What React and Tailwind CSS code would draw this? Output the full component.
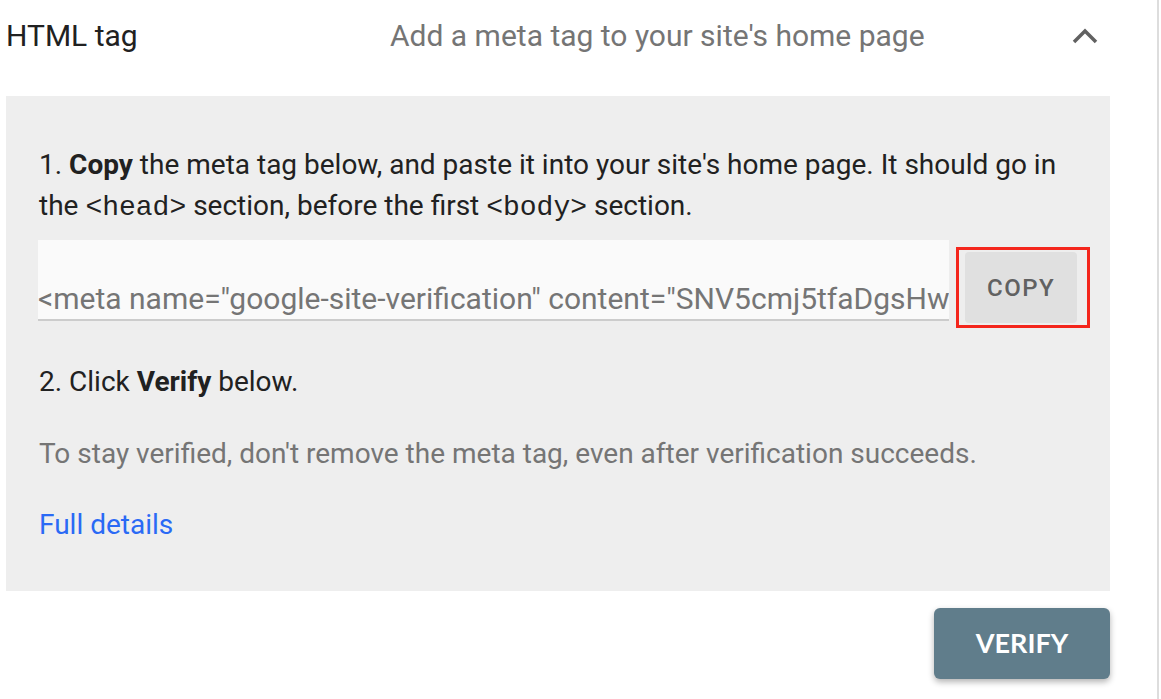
export default function App() {
  const roboto = { fontFamily: "Roboto, 'Liberation Sans', sans-serif" };
  return (
    <div className="w-[1161px] h-[699px] bg-white flex overflow-hidden" style={roboto}>
      <div className="w-[1157px] h-full flex flex-col pl-[6px] pr-[47px]">
        <div className="h-[71px] flex items-center">
          <div className="w-[384px] text-[30px] text-[#212121] font-['Roboto']">HTML tag</div>
          <div className="flex-1 text-[30px] text-[#757575] font-['Roboto']">Add a meta tag to your site's home page</div>
          <svg width="26" height="16" viewBox="0 0 26 16" className="mr-[12px]">
            <path d="M2 14 L13 3 L24 14" fill="none" stroke="#616161" strokeWidth="3.5" />
          </svg>
        </div>
        <div className="h-[25px]" />
        <div className="h-[495px] bg-[#eeeeee] pl-[33px] pr-[20px] pt-[48px] flex flex-col font-['Roboto']">
          <p className="text-[28px] leading-[41px] text-[#212121]">
            1. <span className="font-bold">Copy</span> the meta tag below, and paste it into your site's home page. It should go in the <span className="font-['Liberation_Mono']">&lt;head&gt;</span> section, before the first <span className="font-['Liberation_Mono']">&lt;body&gt;</span> section.
          </p>
          <div className="flex items-start mt-[12px]">
            <div className="w-[912px] h-[81px] -ml-[1px] bg-[#fafafa] border-b-2 border-[#cccccc] overflow-hidden whitespace-nowrap flex items-end text-[30px] leading-[40px] text-[#757575]">
              &lt;meta name="google-site-verification" content="SNV5cmj5tfaDgsHw3kFzX0aQp" /&gt;
            </div>
            <div className="ml-[7px] mt-[7px] w-[134px] h-[81px] border-[3px] border-[#f4261c] pt-[2px] pl-[6px]">
              <div className="w-[112px] h-[71px] bg-[#e0e0e0] rounded-[4px] flex items-center justify-center text-[24px] font-medium tracking-[1.5px] text-[#616161]">
                COPY
              </div>
            </div>
          </div>
          <p className="mt-[33px] text-[28px] leading-[41px] text-[#212121]">
            2. Click <span className="font-bold">Verify</span> below.
          </p>
          <p className="mt-[31px] text-[28px] leading-[41px] text-[#757575]">
            To stay verified, don't remove the meta tag, even after verification succeeds.
          </p>
          <p className="mt-[30px] text-[28px] leading-[41px] text-[#2a6af5]">Full details</p>
        </div>
        <div className="flex justify-end mt-[17px]">
          <div className="w-[176px] h-[71px] rounded-[6px] bg-[#607d8b] shadow-[0_3px_6px_rgba(0,0,0,0.3)] flex items-center justify-center text-white text-[27px] font-bold font-['Lato']">
            VERIFY
          </div>
        </div>
      </div>
      <div className="w-[2px] h-full bg-[#dddddd]" />
      <div className="flex-1 h-full bg-white" />
    </div>
  );
}
